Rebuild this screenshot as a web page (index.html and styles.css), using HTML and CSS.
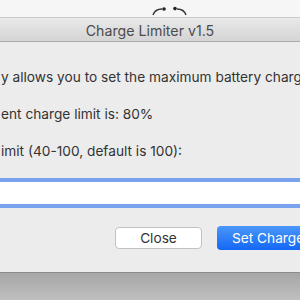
FILE: index.html
```html
<!DOCTYPE html>
<html lang="en">
<head>
    <meta charset="UTF-8">
    <title>Charge Limiter v1.5</title>
    <link rel="stylesheet" href="styles.css">
</head>
<body>
    <div class="desk">
        <svg class="eyes" width="36" height="10" viewBox="0 0 36 10">
            <path d="M1 9 Q3 3 10 3" fill="none" stroke="#333" stroke-width="1.4"/>
            <circle cx="12" cy="3" r="1.8" fill="#222"/>
            <circle cx="23" cy="2.6" r="1.8" fill="#222"/>
            <path d="M25 3 Q32 3 34 9" fill="none" stroke="#333" stroke-width="1.4"/>
        </svg>
    </div>

    <div class="window">
        <div class="titlebar">Charge Limiter v1.5</div>

        <div class="content">
            <p class="line">y allows you to set the maximum battery charge level.</p>
            <p class="line">ent charge limit is: 80%</p>
            <p class="line">imit (40-100, default is 100):</p>

            <div class="field">
                <input type="text" class="input">
            </div>

            <div class="buttons">
                <button class="btn">Close</button>
                <button class="btn primary">Set Charge Limit</button>
            </div>
        </div>
    </div>

    <div class="shadow"></div>
</body>
</html>
```

FILE: styles.css
```css
body {
    margin: 0;
    width: 300px;
    height: 300px;
    overflow: hidden;
    background-color: #f6f6f6;
    font-family: Inter, "Noto Sans", sans-serif;
    color: #333;
}
.desk {
    height: 17px;
    position: relative;
}
.eyes {
    position: absolute;
    left: 152px;
    top: 6px;
}
.window {
    display: flex;
    flex-direction: column;
}
.titlebar {
    height: 23px;
    border-top: 1px solid #c9c9c9;
    border-bottom: 1px solid #ababab;
    background: linear-gradient(#e9e9e9, #d4d4d4);
    text-align: center;
    font-size: 14.2px;
    line-height: 25px;
    color: #4c4c4c;
}
.content {
    height: 230px;
    background-color: #ececec;
    border-bottom: 1px solid #8c8c8c;
    display: flex;
    flex-direction: column;
}
.line {
    margin: 0;
    font-size: 13.7px;
    line-height: 16px;
    white-space: nowrap;
    color: #333;
    padding-left: 1px;
}
.line:first-child {
    margin-top: 27px;
}
.line + .line {
    margin-top: 21px;
}
.field {
    margin-top: 19px;
    border-top: 4px solid #7aa3ef;
    border-bottom: 4px solid #7aa3ef;
}
.input {
    display: block;
    width: 100%;
    height: 22px;
    border: 0;
    margin: 0;
    padding: 0;
    background-color: #fff;
}
.buttons {
    display: flex;
    gap: 15px;
    margin-top: 19px;
    padding-left: 115px;
}
.btn {
    flex: none;
    width: 87px;
    height: 22px;
    border: 1px solid #c2c2c2;
    border-radius: 4px;
    background-color: #fff;
    font-family: Inter, "Noto Sans", sans-serif;
    font-size: 13.7px;
    color: #333;
    padding: 0;
    white-space: nowrap;
}
.primary {
    width: 140px;
    height: 24px;
    margin-top: -1px;
    border: 0;
    background: linear-gradient(#4b97fa, #1468f5);
    color: #fff;
    text-align: left;
    padding-left: 15px;
}
.shadow {
    height: 28px;
    background: linear-gradient(#a6a6a6, #c0c0c0);
}
```
